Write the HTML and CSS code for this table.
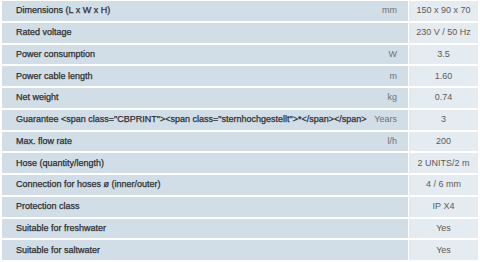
FILE: index.html
```html
<!DOCTYPE html>
<html>
<head>
<meta charset="utf-8">
<link rel="stylesheet" href="styles.css">
</head>
<body>
<table class="specs">
<tbody>
<tr><td class="label">Dimensions (L x W x H)</td><td class="unit">mm</td><td class="value">150 x 90 x 70</td></tr>
<tr><td class="label">Rated voltage</td><td class="unit"></td><td class="value">230 V / 50 Hz</td></tr>
<tr><td class="label">Power consumption</td><td class="unit">W</td><td class="value">3.5</td></tr>
<tr><td class="label">Power cable length</td><td class="unit">m</td><td class="value">1.60</td></tr>
<tr><td class="label">Net weight</td><td class="unit">kg</td><td class="value">0.74</td></tr>
<tr><td class="label">Guarantee &lt;span class="CBPRINT"&gt;&lt;span class="sternhochgestellt"&gt;*&lt;/span&gt;&lt;/span&gt;</td><td class="unit">Years</td><td class="value">3</td></tr>
<tr><td class="label">Max. flow rate</td><td class="unit">l/h</td><td class="value">200</td></tr>
<tr><td class="label">Hose (quantity/length)</td><td class="unit"></td><td class="value">2 UNITS/2 m</td></tr>
<tr><td class="label">Connection for hoses ø (inner/outer)</td><td class="unit"></td><td class="value">4 / 6 mm</td></tr>
<tr><td class="label">Protection class</td><td class="unit"></td><td class="value">IP X4</td></tr>
<tr><td class="label">Suitable for freshwater</td><td class="unit"></td><td class="value">Yes</td></tr>
<tr><td class="label">Suitable for saltwater</td><td class="unit"></td><td class="value">Yes</td></tr>
</tbody>
</table>
</body>
</html>
```
FILE: styles.css
```css
html, body {
  margin: 0;
  padding: 0;
  background: #ffffff;
}
body {
  padding: 1px 2px 0 2px;
  font-family: "Liberation Sans", Arial, sans-serif;
  font-size: 9px;
  color: #444;
}
.specs {
  width: 476px;
  table-layout: fixed;
  border-collapse: separate;
  border-spacing: 0 2px;
  margin-top: -2px;
}
.specs td {
  height: 19.75px;
  padding: 0;
  white-space: nowrap;
  line-height: 11px;
}
.label {
  width: 340px;
  background: #d1dee8;
  padding-left: 14px !important;
  color: #2e2e2e;
  -webkit-text-stroke: 0.25px #2e2e2e;
}
.unit {
  background: #d1dee8;
  text-align: right;
  padding-right: 11px !important;
  color: #707070;
}
.value {
  width: 69px;
  background: #e5ecf1;
  text-align: center;
  color: #5a5a5a;
  border-left: 1px solid #ffffff;
}
```
